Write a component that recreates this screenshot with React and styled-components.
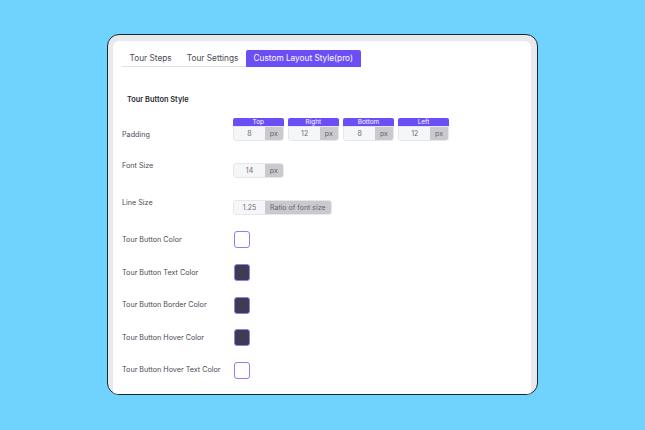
import React from "react";
import styled, { createGlobalStyle } from "styled-components";

const Global = createGlobalStyle`
  html, body { margin: 0; padding: 0; }
  body {
    background: #6fd3fd;
    font-family: "Inter", "Noto Sans", sans-serif;
    width: 645px;
    height: 430px;
    overflow: hidden;
  }
`;

const Page = styled.div`
  width: 645px;
  height: 430px;
  padding: 34px 0 0 107px;
  box-sizing: border-box;
`;

const Card = styled.div`
  width: 431px;
  height: 361px;
  box-sizing: border-box;
  border: 1.5px solid #1d2633;
  border-radius: 12px;
  background: #e8e9ec;
  padding: 6px 6px 0 5px;
  overflow: hidden;
  display: flex;
`;

const Panel = styled.div`
  flex: 1;
  background: #fff;
  border-radius: 6px 6px 0 0;
  padding: 9px 0 0 9px;
`;

const Tabs = styled.div`
  display: flex;
  align-items: stretch;
  height: 17px;
`;

const Tab = styled.div`
  padding: 0 7.6px;
  font-size: 8.25px;
  line-height: 17px;
  color: ${p => (p.$active ? "#fff" : "#4a4a55")};
  background: ${p => (p.$active ? "#6b4ef6" : "transparent")};
  border-bottom: 1px solid ${p => (p.$active ? "#6b4ef6" : "#e0e1e5")};
  border-radius: ${p => (p.$active ? "2px 2px 0 0" : "0")};
  white-space: nowrap;
`;

const Heading = styled.div`
  margin: 28px 0 0 5px;
  font-size: 7.4px;
  font-weight: 600;
  line-height: 10px;
  color: #2b2b33;
`;

const Row = styled.div`
  display: flex;
  align-items: ${p => p.$align || "flex-start"};
  margin-top: ${p => p.$mt}px;
`;

const Label = styled.div`
  width: 111px;
  flex: none;
  font-size: 7.2px;
  line-height: ${p => p.$lh || 10}px;
  padding-top: ${p => p.$pt || 0}px;
  color: #4b4b55;
  white-space: nowrap;
`;

const Control = styled.div`
  display: flex;
  gap: 4.6px;
  margin-top: ${p => p.$mt || 0}px;
`;

const Group = styled.div`
  display: flex;
  flex-direction: column;
  width: 50.5px;
`;

const GroupHead = styled.div`
  height: 8px;
  background: #6b4ef6;
  color: #fff;
  font-size: 6.4px;
  line-height: 8px;
  text-align: center;
  border-radius: 2px 2px 0 0;
`;

const Field = styled.div`
  display: flex;
  height: 15px;
  border-radius: ${p => (p.$flatTop ? "0 0 3px 3px" : "3px")};
  overflow: hidden;
  border: 1px solid #e6e7ea;
  box-sizing: border-box;
  width: ${p => p.$w}px;
`;

const Value = styled.div`
  width: 31px;
  flex: none;
  background: #f5f6f8;
  color: #6b6b72;
  font-size: 7px;
  line-height: 13px;
  text-align: center;
`;

const Addon = styled.div`
  flex: 1;
  background: #c9c9ce;
  color: #66666d;
  font-size: 7px;
  line-height: 13px;
  text-align: center;
  white-space: nowrap;
`;

const Swatch = styled.div`
  width: 16px;
  height: 17px;
  box-sizing: border-box;
  border-radius: 3px;
  border: 1px solid #8d7ff2;
  background: ${p => p.$c};
  margin-left: 0.5px;
`;

const paddings = [
  ["Top", "8"],
  ["Right", "12"],
  ["Bottom", "8"],
  ["Left", "12"],
];

const colors = [
  ["Tour Button Color", "#ffffff", 16],
  ["Tour Button Text Color", "#3d3c50", 16],
  ["Tour Button Border Color", "#3d3c50", 15.5],
  ["Tour Button Hover Color", "#3d3c50", 15.5],
  ["Tour Button Hover Text Color", "#ffffff", 15.5],
];

export default function App() {
  return (
    <>
      <Global />
      <Page>
        <Card>
          <Panel>
            <Tabs>
              <Tab>Tour Steps</Tab>
              <Tab>Tour Settings</Tab>
              <Tab $active>Custom Layout Style(pro)</Tab>
            </Tabs>
            <Heading>Tour Button Style</Heading>

            <Row $align="flex-end" $mt={13}>
              <Label $lh={12}>Padding</Label>
              <Control>
                {paddings.map(([h, v]) => (
                  <Group key={h}>
                    <GroupHead>{h}</GroupHead>
                    <Field $flatTop $w={50.5}>
                      <Value>{v}</Value>
                      <Addon>px</Addon>
                    </Field>
                  </Group>
                ))}
              </Control>
            </Row>

            <Row $mt={18}>
              <Label $pt={2}>Font Size</Label>
              <Control $mt={4}>
                <Field $w={50.5}>
                  <Value>14</Value>
                  <Addon>px</Addon>
                </Field>
              </Control>
            </Row>

            <Row $mt={18}>
              <Label $pt={2}>Line Size</Label>
              <Control $mt={4}>
                <Field $w={98.5}>
                  <Value>1.25</Value>
                  <Addon>Ratio of font size</Addon>
                </Field>
              </Control>
            </Row>

            {colors.map(([l, c, mt]) => (
              <Row key={l} $align="center" $mt={mt}>
                <Label $pt={0}>{l}</Label>
                <Swatch $c={c} />
              </Row>
            ))}
          </Panel>
        </Card>
      </Page>
    </>
  );
}
